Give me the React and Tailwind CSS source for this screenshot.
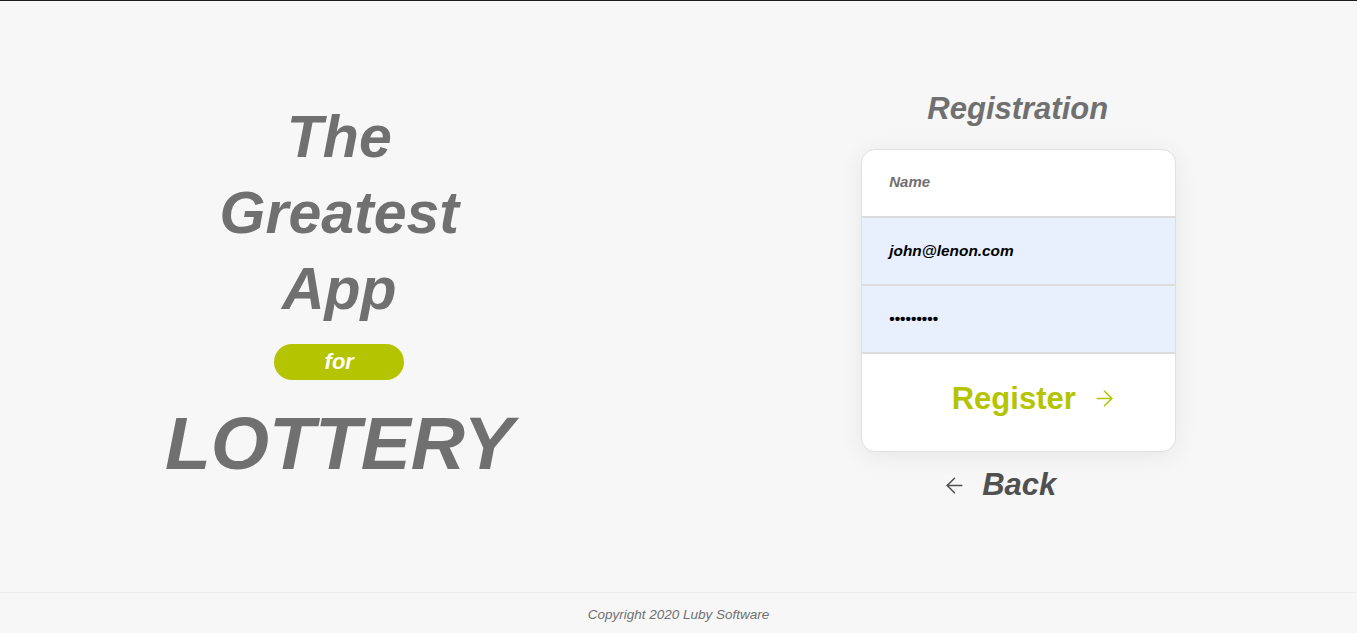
import React from "react";
import { ArrowRight, ArrowLeft } from "lucide-react";

export default function App() {
  return (
    <div
      className="h-[633px] flex flex-col bg-[#f7f7f7] border-t border-[#1c1c1c] overflow-hidden"
      style={{ fontFamily: '"Liberation Sans", Arial, sans-serif' }}
    >
      <main className="flex-1 grid grid-cols-2">
        <div className="flex flex-col items-center justify-center pb-[13px] text-[#707070] italic font-bold">
          <div className="text-[59px] leading-[76px]">The</div>
          <div className="text-[59px] leading-[76px]">Greatest</div>
          <div className="text-[59px] leading-[76px]">App</div>
          <div className="mt-[17px] w-[130px] h-[36px] rounded-full bg-[#b5c401] flex items-center justify-center text-white text-[22px] leading-none">
            for
          </div>
          <div className="mt-[26px] text-[75px] leading-[75px]">LOTTERY</div>
        </div>

        <div className="flex flex-col items-center justify-center">
          <h1 className="text-[31px] leading-[36px] italic font-bold text-[#707070]">
            Registration
          </h1>
          <div className="mt-[22px] ml-[2px] w-[315px] bg-white border border-[#e0e0e0] rounded-[14px] shadow-[0_4px_24px_rgba(0,0,0,0.07)] overflow-hidden">
            <div className="h-[68px] border-b-2 border-[#dddddd] flex items-center px-[27px] text-[15px] italic font-bold text-[#707070]">
              Name
            </div>
            <div className="h-[68px] border-b-2 border-[#dddddd] bg-[#e8f0fe] flex items-center px-[27px] text-[15.4px] italic font-bold text-black">
              john@lenon.com
            </div>
            <div className="h-[68px] border-b-2 border-[#dddddd] bg-[#e8f0fe] flex items-center px-[27px] text-[15.5px] font-bold text-black">
              •••••••••
            </div>
            <div className="h-[97px] flex items-center justify-center pl-[31px] pb-[7px] text-[#b5c401]">
              <span className="text-[31px] leading-[36px] font-bold">Register</span>
              <ArrowRight size={25} strokeWidth={1.5} className="ml-[16px]" />
            </div>
          </div>
          <div className="mt-[15px] flex items-center pr-[37px] text-[#505050]">
            <ArrowLeft size={25} strokeWidth={1.5} className="mt-[1px]" />
            <span className="ml-[15px] text-[31px] leading-[36px] italic font-bold">Back</span>
          </div>
        </div>
      </main>
      <footer className="h-[41px] border-t border-[#ebebeb] flex items-center justify-center pt-[4px] text-[13.5px] italic text-[#707070]">
        Copyright 2020 Luby Software
      </footer>
    </div>
  );
}
